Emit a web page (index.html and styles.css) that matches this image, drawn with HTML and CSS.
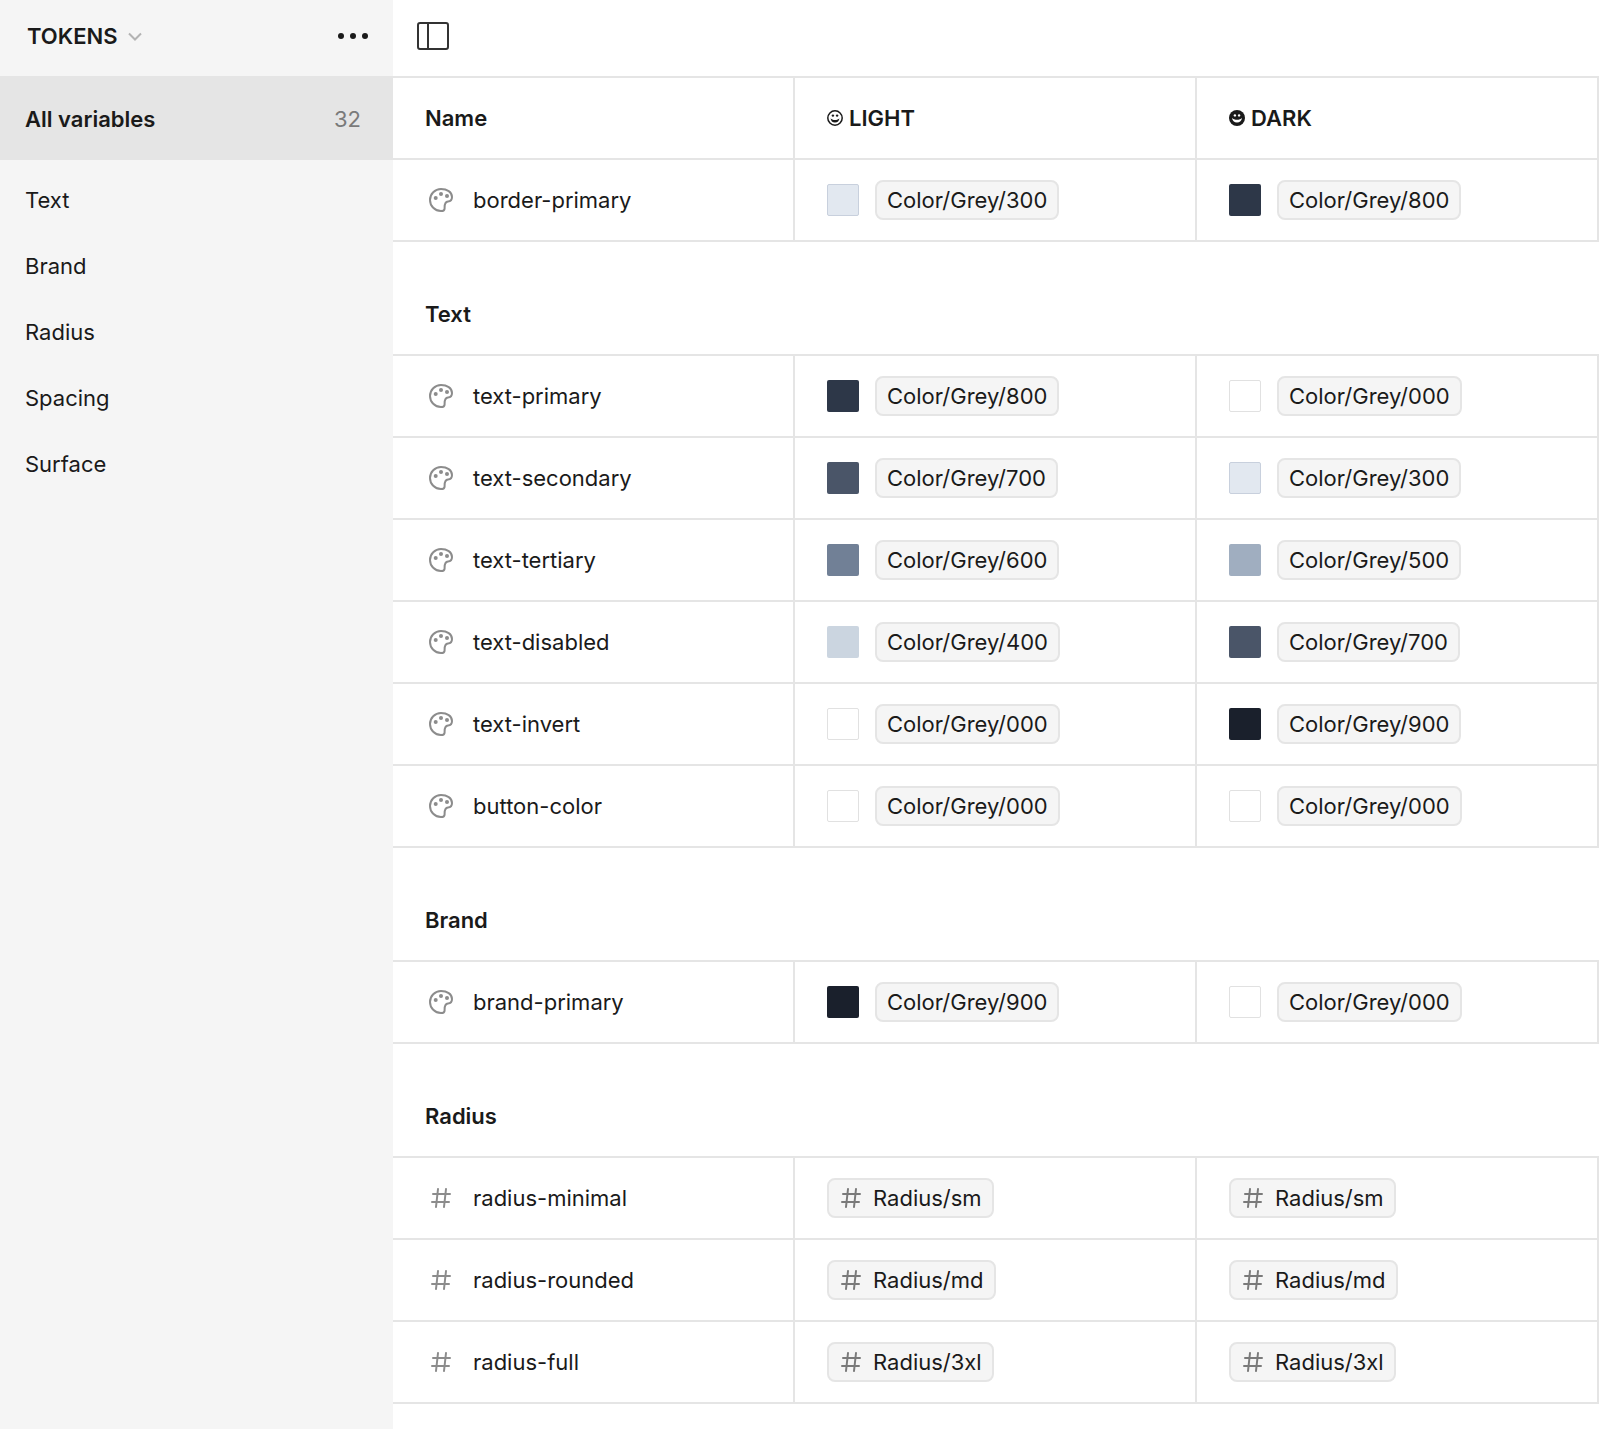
FILE: index.html
```html
<!DOCTYPE html>
<html lang="en">
<head>
<meta charset="utf-8">
<meta name="viewport" content="width=device-width, initial-scale=1">
<title>Variables</title>
<link rel="stylesheet" href="styles.css">
</head>
<body>
<svg class="sprite" aria-hidden="true">
  <symbol id="palette" viewBox="0 0 24 24">
    <path d="M12 1C5.900 1 1 5.900 1 12s4.900 11 11 11c2.300 0 3.600-.6 3.600-2.600 0-2.800-.4-6.600 3.400-6.900 2.400-.2 4-1.800 4-4.500C23 4 18 1 12 1Z" fill="none" stroke="currentColor" stroke-width="2"/>
    <circle cx="6.700" cy="10" r="2"/><circle cx="12" cy="6" r="2"/><circle cx="18" cy="8" r="2"/>
  </symbol>
  <symbol id="number" viewBox="0 0 20 20">
    <path d="M2 6H19M1 14H18M7 1L5 19M15 1L13 19" fill="none" stroke="currentColor" stroke-width="2" stroke-linecap="round"/>
  </symbol>
</svg>
<div class="app">
  <aside class="sidebar">
    <header class="bar bar-side">
      <button class="collection" type="button">TOKENS
        <svg width="14" height="9" viewBox="0 0 14 9" aria-hidden="true"><path d="M1 1.500L7 7.500L13 1.500" fill="none" stroke="currentColor" stroke-width="2"/></svg>
      </button>
      <button class="icon-button" type="button" aria-label="More options">
        <svg width="30" height="6" viewBox="0 0 30 6" fill="currentColor" aria-hidden="true"><circle cx="3" cy="3" r="3"/><circle cx="15" cy="3" r="3"/><circle cx="27" cy="3" r="3"/></svg>
      </button>
    </header>
    <nav class="groups">
      <a class="all" href="#all">All variables <span class="count">32</span></a>
      <ul>
        <li><a href="#text">Text</a></li>
        <li><a href="#brand">Brand</a></li>
        <li><a href="#radius">Radius</a></li>
        <li><a href="#spacing">Spacing</a></li>
        <li><a href="#surface">Surface</a></li>
      </ul>
    </nav>
  </aside>
  <main class="main">
    <header class="bar bar-main">
      <button class="icon-button" type="button" aria-label="Toggle sidebar">
        <svg width="32" height="28" viewBox="0 0 32 28" fill="none" stroke="#333" stroke-width="2" aria-hidden="true"><rect x="1" y="1" width="30" height="26" rx="2"/><path d="M11 1V27"/></svg>
      </button>
    </header>
    <table class="variables" id="all">
      <thead>
        <tr>
          <th scope="col">Name</th>
          <th scope="col"><div class="mode"><svg width="16" height="16" viewBox="0 0 16 16" fill="currentColor" aria-hidden="true"><circle cx="8" cy="8" r="7.200" fill="none" stroke="currentColor" stroke-width="1.500"/><circle cx="5.900" cy="5.600" r="1.200"/><circle cx="10.100" cy="5.600" r="1.200"/><path d="M3.600 8.200C5 10.600 11 10.600 12.400 8.200C12.200 11 10.500 12.500 8 12.500S3.800 11 3.600 8.200Z"/></svg>LIGHT</div></th>
          <th scope="col"><div class="mode"><svg width="16" height="16" viewBox="0 0 16 16" fill="#fff" aria-hidden="true"><circle cx="8" cy="8" r="8" fill="currentColor"/><circle cx="5.900" cy="5.400" r="1.200"/><circle cx="10.100" cy="5.400" r="1.200"/><path d="M3 7.800C5 10.500 11 10.500 13 7.800C12.800 11 10.700 12.600 8 12.600S3.200 11 3 7.800Z"/></svg>DARK</div></th>
        </tr>
      </thead>
      <tbody>
        <tr>
          <td><div class="cell"><svg class="type"><use href="#palette"/></svg>border-primary</div></td>
          <td><div class="cell"><span class="swatch grey-300"></span><button class="chip" type="button">Color/Grey/300</button></div></td>
          <td><div class="cell"><span class="swatch grey-800"></span><button class="chip" type="button">Color/Grey/800</button></div></td>
        </tr>
      </tbody>
      <tbody id="text">
        <tr class="group"><th colspan="3" scope="rowgroup">Text</th></tr>
        <tr>
          <td><div class="cell"><svg class="type"><use href="#palette"/></svg>text-primary</div></td>
          <td><div class="cell"><span class="swatch grey-800"></span><button class="chip" type="button">Color/Grey/800</button></div></td>
          <td><div class="cell"><span class="swatch grey-000"></span><button class="chip" type="button">Color/Grey/000</button></div></td>
        </tr>
        <tr>
          <td><div class="cell"><svg class="type"><use href="#palette"/></svg>text-secondary</div></td>
          <td><div class="cell"><span class="swatch grey-700"></span><button class="chip" type="button">Color/Grey/700</button></div></td>
          <td><div class="cell"><span class="swatch grey-300"></span><button class="chip" type="button">Color/Grey/300</button></div></td>
        </tr>
        <tr>
          <td><div class="cell"><svg class="type"><use href="#palette"/></svg>text-tertiary</div></td>
          <td><div class="cell"><span class="swatch grey-600"></span><button class="chip" type="button">Color/Grey/600</button></div></td>
          <td><div class="cell"><span class="swatch grey-500"></span><button class="chip" type="button">Color/Grey/500</button></div></td>
        </tr>
        <tr>
          <td><div class="cell"><svg class="type"><use href="#palette"/></svg>text-disabled</div></td>
          <td><div class="cell"><span class="swatch grey-400"></span><button class="chip" type="button">Color/Grey/400</button></div></td>
          <td><div class="cell"><span class="swatch grey-700"></span><button class="chip" type="button">Color/Grey/700</button></div></td>
        </tr>
        <tr>
          <td><div class="cell"><svg class="type"><use href="#palette"/></svg>text-invert</div></td>
          <td><div class="cell"><span class="swatch grey-000"></span><button class="chip" type="button">Color/Grey/000</button></div></td>
          <td><div class="cell"><span class="swatch grey-900"></span><button class="chip" type="button">Color/Grey/900</button></div></td>
        </tr>
        <tr>
          <td><div class="cell"><svg class="type"><use href="#palette"/></svg>button-color</div></td>
          <td><div class="cell"><span class="swatch grey-000"></span><button class="chip" type="button">Color/Grey/000</button></div></td>
          <td><div class="cell"><span class="swatch grey-000"></span><button class="chip" type="button">Color/Grey/000</button></div></td>
        </tr>
      </tbody>
      <tbody id="brand">
        <tr class="group"><th colspan="3" scope="rowgroup">Brand</th></tr>
        <tr>
          <td><div class="cell"><svg class="type"><use href="#palette"/></svg>brand-primary</div></td>
          <td><div class="cell"><span class="swatch grey-900"></span><button class="chip" type="button">Color/Grey/900</button></div></td>
          <td><div class="cell"><span class="swatch grey-000"></span><button class="chip" type="button">Color/Grey/000</button></div></td>
        </tr>
      </tbody>
      <tbody id="radius">
        <tr class="group"><th colspan="3" scope="rowgroup">Radius</th></tr>
        <tr>
          <td><div class="cell"><svg class="type number"><use href="#number"/></svg>radius-minimal</div></td>
          <td><div class="cell"><button class="chip" type="button"><svg class="hash"><use href="#number"/></svg>Radius/sm</button></div></td>
          <td><div class="cell"><button class="chip" type="button"><svg class="hash"><use href="#number"/></svg>Radius/sm</button></div></td>
        </tr>
        <tr>
          <td><div class="cell"><svg class="type number"><use href="#number"/></svg>radius-rounded</div></td>
          <td><div class="cell"><button class="chip" type="button"><svg class="hash"><use href="#number"/></svg>Radius/md</button></div></td>
          <td><div class="cell"><button class="chip" type="button"><svg class="hash"><use href="#number"/></svg>Radius/md</button></div></td>
        </tr>
        <tr>
          <td><div class="cell"><svg class="type number"><use href="#number"/></svg>radius-full</div></td>
          <td><div class="cell"><button class="chip" type="button"><svg class="hash"><use href="#number"/></svg>Radius/3xl</button></div></td>
          <td><div class="cell"><button class="chip" type="button"><svg class="hash"><use href="#number"/></svg>Radius/3xl</button></div></td>
        </tr>
      </tbody>
    </table>
  </main>
</div>
</body>
</html>
```
FILE: styles.css
```css
:root {
  --line: #e5e5e5;
  --panel: #f5f5f5;
  --ink: #1a1a1a;
  --muted: #7a7a7a;
}

* { box-sizing: border-box; }

body {
  margin: 0;
  background: #fff;
  color: var(--ink);
  font: 400 22px/32px Inter, sans-serif;
}

button {
  padding: 0;
  border: 0;
  background: none;
  color: inherit;
  font: inherit;
  cursor: pointer;
}

a { color: inherit; text-decoration: none; }
svg { display: block; flex: none; }
.sprite { position: absolute; width: 0; height: 0; }

.app { display: flex; min-height: 100vh; }
.sidebar { flex: none; width: 393px; background: var(--panel); }
.main { flex: 1; min-width: 0; }

.bar {
  display: flex;
  align-items: center;
  justify-content: space-between;
  height: 78px;
  padding: 0 24px 4px;
  border-bottom: 2px solid var(--line);
}
.bar-side { padding: 0 25px 4px 27px; }

.collection {
  display: flex;
  align-items: center;
  gap: 10px;
  font-weight: 600;
}
.collection svg { color: #b3b3b3; }

.all {
  display: flex;
  justify-content: space-between;
  padding: 25px 32px 25px 25px;
  background: var(--line);
  font-weight: 600;
}
.count { color: var(--muted); font-weight: 400; }

.groups ul { margin: 0; padding: 7px 0; list-style: none; }
.groups li a { display: block; padding: 17px 25px; }

.variables {
  width: 100%;
  table-layout: fixed;
  border-spacing: 0;
}
.variables th,
.variables td {
  height: 82px;
  padding: 0 32px;
  border-right: 2px solid var(--line);
  border-bottom: 2px solid var(--line);
  text-align: left;
}
.variables th { font-weight: 600; }
.variables .group th {
  height: 114px;
  padding-top: 32px;
  border-right: 0;
}

.mode { display: flex; align-items: center; gap: 6px; }
.cell { display: flex; align-items: center; gap: 16px; }

.type {
  width: 32px;
  height: 32px;
  padding: 4px;
  color: #8c8c8c;
  fill: currentColor;
}
.number { padding: 6px; }

.swatch {
  width: 32px;
  height: 32px;
  border-radius: 2px;
}
.grey-000 { background: #fff; border: 1px solid #e1e1e1; }
.grey-300 { background: #e2e8f0; border: 1px solid #c8d0dd; }
.grey-400 { background: #cbd5e0; }
.grey-500 { background: #a0aec0; }
.grey-600 { background: #718096; }
.grey-700 { background: #4a5568; }
.grey-800 { background: #2d3748; }
.grey-900 { background: #1a202c; }

.chip {
  display: flex;
  align-items: center;
  gap: 10px;
  height: 40px;
  padding: 0 10px;
  border: 2px solid var(--line);
  border-radius: 8px;
  background: var(--panel);
}
.hash {
  width: 24px;
  height: 24px;
  padding: 2px;
  color: var(--muted);
}
```
